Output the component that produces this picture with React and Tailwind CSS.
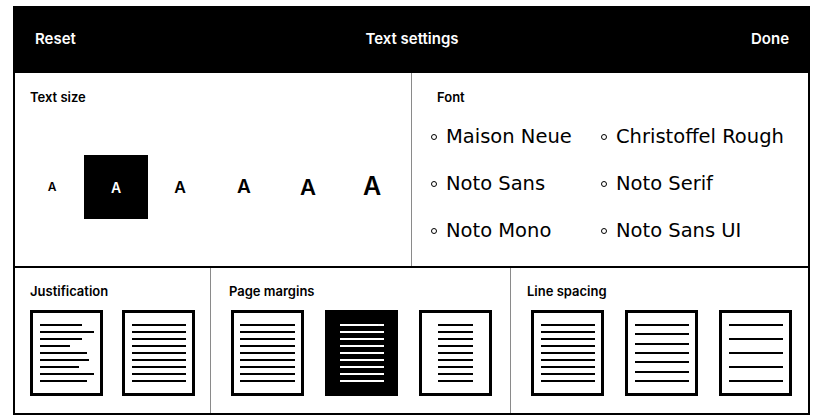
import React, { useState } from 'react';

const sizes = [12, 14, 16, 19, 22, 25];
const fonts = [
  ['Maison Neue', 'Christoffel Rough'],
  ['Noto Sans', 'Noto Serif'],
  ['Noto Mono', 'Noto Sans UI'],
];
const ragged = [42, 54, 42, 30, 47, 49, 39, 54, 47];

function Page({ dark = false, lines = 9, gap = 'gap-[5px]', width = 54, widths, left = false }) {
  const rows = widths || Array(lines).fill(width);
  return (
    <div
      className={`w-[73px] h-[86px] border-[3px] border-black flex flex-col justify-center ${gap} ${left ? 'items-start pl-[7px]' : 'items-center'} ${dark ? 'bg-black' : 'bg-white'}`}
    >
      {rows.map((w, i) => (
        <div key={i} className={`h-[2px] ${dark ? 'bg-white' : 'bg-black'}`} style={{ width: w }} />
      ))}
    </div>
  );
}

export default function App() {
  const [size, setSize] = useState(1);
  const [font, setFont] = useState('Noto Sans');

  return (
    <div className="w-[820px] h-[420px] bg-white pt-[6px] pl-[13px] font-['Inter',sans-serif] text-black">
      <div className="w-[797px] h-[409px] border-x-2 border-b-2 border-black flex flex-col">
        {/* header */}
        <div className="h-[67px] shrink-0 bg-black text-white text-[15px] font-semibold flex items-center pl-[20px] pr-[19px]">
          <button className="flex-1 text-left">Reset</button>
          <div>Text settings</div>
          <button className="flex-1 text-right">Done</button>
        </div>

        {/* size + font */}
        <div className="h-[195px] shrink-0 flex border-b-2 border-black">
          <div className="w-[397px] pt-[16px] border-r border-[#8a8a8a]">
            <div className="pl-[15px] text-[13px] font-semibold leading-4">Text size</div>
            <div className="mt-[50px] pl-[5px] flex">
              {sizes.map((s, i) => (
                <button
                  key={s}
                  onClick={() => setSize(i)}
                  className={`w-[64px] h-[64px] flex items-center justify-center font-semibold ${size === i ? 'bg-black text-white' : ''}`}
                  style={{ fontSize: s }}
                >
                  A
                </button>
              ))}
            </div>
          </div>
          <div className="flex-1 pt-[16px]">
            <div className="pl-[25px] text-[13px] font-semibold leading-4">Font</div>
            <div className="mt-[8px] pl-[19px] flex flex-col font-['DejaVu_Sans',sans-serif] text-[19.5px]">
              {fonts.map((row, r) => (
                <div key={r} className="h-[47px] flex items-center">
                  {row.map((f, c) => (
                    <button
                      key={f}
                      onClick={() => setFont(f)}
                      className={`flex items-center gap-[9px] ${c === 0 ? 'w-[170px]' : ''}`}
                    >
                      <span className="w-[6px] h-[6px] rounded-full border border-black" />
                      {f}
                    </button>
                  ))}
                </div>
              ))}
            </div>
          </div>
        </div>

        {/* bottom row */}
        <div className="flex-1 flex text-[13px] font-semibold">
          <div className="w-[196px] pt-[15px] pl-[15px] border-r border-[#8a8a8a]">
            <div className="leading-4">Justification</div>
            <div className="mt-[11px] flex gap-[19px]">
              <Page left widths={ragged} />
              <Page />
            </div>
          </div>
          <div className="w-[300px] pt-[15px] pl-[18px] border-r border-[#8a8a8a]">
            <div className="leading-4">Page margins</div>
            <div className="mt-[11px] ml-[2px] flex gap-[21px]">
              <Page width={55} />
              <Page dark width={44} />
              <Page width={35} />
            </div>
          </div>
          <div className="flex-1 pt-[15px] pl-[16px]">
            <div className="leading-4">Line spacing</div>
            <div className="mt-[11px] ml-[4px] flex gap-[21px]">
              <Page />
              <Page lines={7} gap="gap-[7.33px]" />
              <Page lines={5} gap="gap-[12px]" />
            </div>
          </div>
        </div>
      </div>
    </div>
  );
}
